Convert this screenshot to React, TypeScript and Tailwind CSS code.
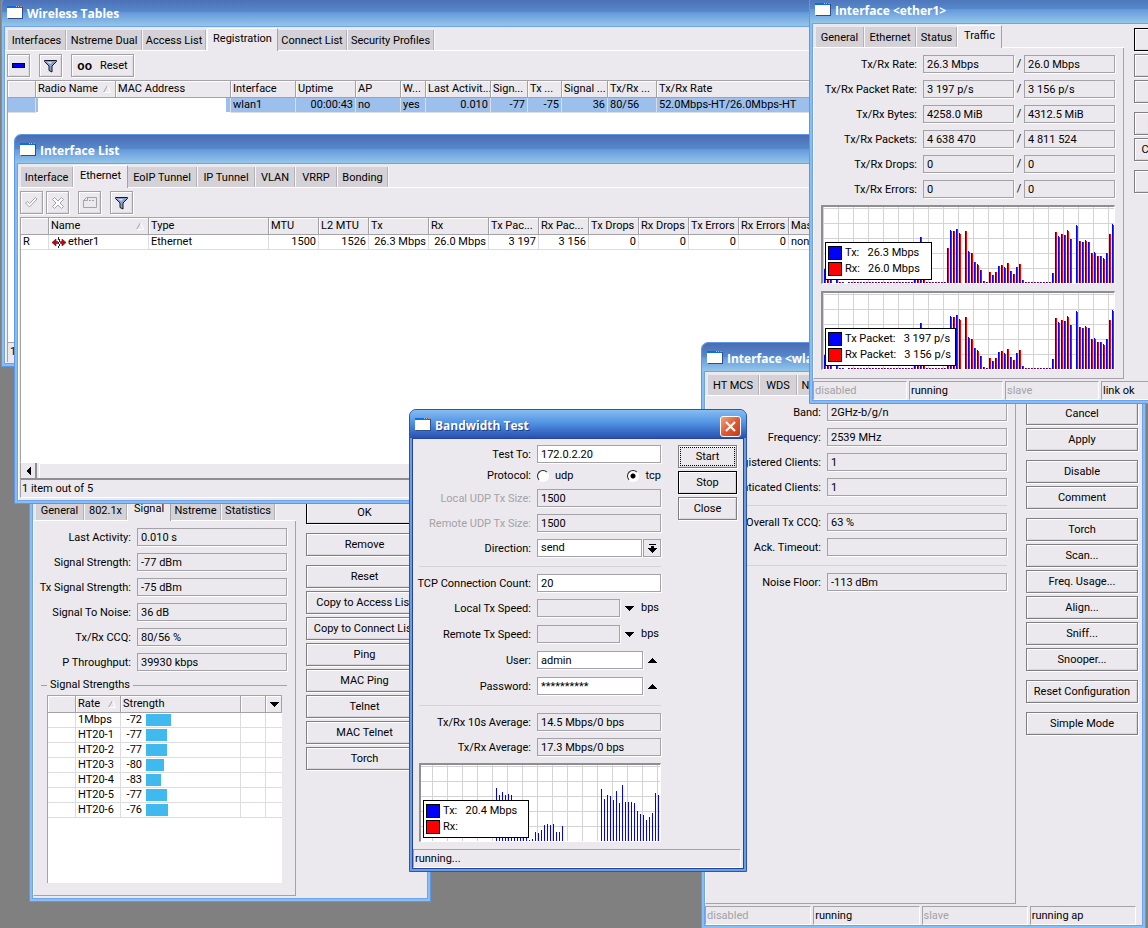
import { ReactNode, useId } from "react";
import clsx from "clsx";

interface WinProps {
  title: string;
  place: string;
  active?: boolean;
  children: ReactNode;
}

const WinIcon = () => (
  <svg className="mb-[3px]" width="16" height="13" viewBox="0 0 16 13" aria-hidden="true">
    <rect x="1" y="1" width="15" height="12" fill="#2f4f8a" />
    <rect width="15" height="12" fill="#fffdf6" />
    <rect width="15" height="2" fill="#0a6fdc" />
    <rect x="9" width="1" height="1" fill="#9cc8f5" />
    <rect x="11" width="1" height="1" fill="#9cc8f5" />
    <rect x="13" width="2" height="1" fill="#f0703a" />
  </svg>
);

const Win = ({ title, place, active, children }: WinProps) => (
  <section
    className={clsx(
      "absolute flex flex-col overflow-hidden rounded-t-[7px] border",
      active ? "border-[#2b55b5] bg-[#6a9ee0]" : "border-[#5f97e8] bg-[#8abef0]",
      place
    )}
  >
    <header
      className={clsx(
        "flex h-7 shrink-0 items-center gap-1 pl-[5px] pt-1",
        active
          ? "bg-linear-to-b from-[#86bdf2] via-[#4d8fe0] to-[#2a4fb0]"
          : "bg-[linear-gradient(#4b6cb2,#5588cb_48%,#6699dc_52%,#94c6e8)]"
      )}
    >
      <WinIcon />
      <h2
        className={clsx(
          "grow font-['Open_Sans',sans-serif] text-[12px] leading-4 font-bold whitespace-nowrap text-white",
          active && "[text-shadow:1px_1px_0_#1c3a8c]"
        )}
      >
        {title}
      </h2>
      {active && (
        <button
          aria-label="Close window"
          className="mr-[5px] flex h-[21px] w-[21px] items-center justify-center rounded-[3px] border border-white bg-linear-to-br from-[#f0a080] via-[#e05a35] to-[#c23a1a]"
        >
          <svg width="13" height="13" viewBox="0 0 13 13">
            <path d="M2 2L11 11M11 2L2 11" stroke="#fff" strokeWidth="2.2" />
          </svg>
        </button>
      )}
    </header>
    <div className="flex min-h-0 grow px-[2px] pb-[2px]">
      <div
        className={clsx(
          "flex min-w-0 grow flex-col border bg-[#ebe9ed]",
          active ? "border-[#2444a0]" : "border-[#6ca2ee]"
        )}
      >
        {children}
      </div>
    </div>
  </section>
);

interface Tab {
  name: string;
  width: string;
  active?: boolean;
}

const Tabs = ({ tabs }: { tabs: Tab[] }) => (
  <div role="tablist" className="flex h-6 shrink-0 items-end pl-[3px] shadow-[inset_0_-1px_0_#fff]">
    {tabs.map((t) => (
      <button
        key={t.name}
        role="tab"
        aria-selected={!!t.active}
        className={clsx(
          "shrink-0 whitespace-nowrap",
          t.width,
          t.active
            ? "h-[23px] border-t border-r border-l border-t-white border-r-[#a3a2a7] border-l-white bg-[#ebe9ed] pb-[2px]"
            : "mb-px h-5 border-r border-r-[#b3b2b6] bg-[#d4d2d6] pt-px shadow-[1px_0_0_#f7f6f8]"
        )}
      >
        {t.name}
      </button>
    ))}
  </div>
);

const Btn = ({ children, look = "plain" }: { children: ReactNode; look?: "plain" | "default" | "focus" }) => (
  <button
    className={clsx(
      "h-[23px] w-full border text-center whitespace-nowrap shadow-[inset_1px_1px_0_#fff,inset_-1px_-1px_0_#d8d6db,1px_1px_0_#fff]",
      look === "default" ? "border-black" : "border-[#7f7e83]",
      look === "focus" && "outline-1 -outline-offset-3 outline-black outline-dotted"
    )}
  >
    {children}
  </button>
);

const ButtonColumn = ({ groups, width }: { groups: string[][]; width: string }) => (
  <div className={clsx("flex shrink-0 flex-col gap-[9px] pt-1 pr-1 pl-[10px]", width)}>
    {groups.map((g) => (
      <div key={g[0]} className="flex flex-col gap-[3px]">
        {g.map((b) => (
          <Btn key={b} look={b === "OK" ? "default" : "plain"}>
            {b}
          </Btn>
        ))}
      </div>
    ))}
  </div>
);

const ToolBtn = ({ label, wide, children }: { label: string; wide?: boolean; children: ReactNode }) => (
  <button
    aria-label={label}
    className={clsx(
      "flex h-[23px] items-center justify-center gap-2 border border-[#a3a2a7] shadow-[inset_1px_1px_0_#fff,inset_-1px_-1px_0_#dddbe0,1px_1px_0_#fff]",
      wide ? "w-[63px]" : "w-[23px]"
    )}
  >
    {children}
  </button>
);

const Funnel = () => (
  <svg width="13" height="14" viewBox="0 0 13 14">
    <path d="M0.5 1.5H12.5V2.5L8 7V13L5 11.5V7L0.5 2.5Z" fill="#8aa0cc" stroke="#16161c" />
    <path d="M3 3H8L6.5 5Z" fill="#d9e2f4" />
  </svg>
);

const SortMark = () => (
  <svg className="mr-1 shrink-0" width="8" height="8" viewBox="0 0 8 8" aria-hidden="true">
    <path d="M4.5 0.5L0.5 7.5" stroke="#a3a2a7" fill="none" />
    <path d="M4.5 0.5L7.5 7.5H0.5" stroke="#fff" fill="none" />
  </svg>
);

const Triangle = ({ up }: { up?: boolean }) => (
  <svg width="9" height="5" viewBox="0 0 9 5" shapeRendering="crispEdges">
    <path d={up ? "M0 5L4.5 0L9 5Z" : "M0 0H9L4.5 5Z"} />
  </svg>
);

const inputBase = "h-[18px] min-w-0 border border-[#a3a2a7] pl-[3px] shadow-[1px_1px_0_#fff] outline-none";

interface FieldProps {
  label: string;
  value?: string;
  value2?: string;
  labelWidth: string;
  dim?: boolean;
  editable?: boolean;
  tall?: boolean;
  inputWidth?: string;
  after?: ReactNode;
}

const Field = ({ label, value = "", value2, labelWidth, dim, editable, tall, inputWidth = "flex-1", after }: FieldProps) => {
  const id = useId();
  const input = clsx(inputBase, inputWidth, editable ? "bg-white" : "bg-[#ebe9ed]");

  return (
    <div className={clsx("flex items-start", tall ? "h-[19px]" : "h-[18px]")}>
      <label
        htmlFor={id}
        className={clsx("mr-[6px] flex shrink-0 justify-end leading-5 whitespace-nowrap", labelWidth, dim && "text-[#a3a2a7]")}
      >
        {label}:
      </label>
      <input id={id} className={input} defaultValue={value} readOnly={!editable} />
      {value2 !== undefined && (
        <>
          <span className="w-[10px] text-center leading-[18px]">/</span>
          <input aria-label={`${label}, received`} className={input} defaultValue={value2} readOnly />
        </>
      )}
      {after}
    </div>
  );
};

const Separator = () => <div className="h-[3px] border-b border-[#d3d2d6]" />;

interface ChartProps {
  width: number;
  gridStart: number;
  tx: number[];
  both?: boolean;
  legend: [string, string];
  legendWidth: string;
}

const Chart = ({ width, gridStart, tx, both, legend, legendWidth }: ChartProps) => {
  const columns = Array.from({ length: Math.ceil((width - gridStart) / 15) }, (_, i) => gridStart + i * 15);
  const rows = [1, 16, 31, 46, 61];

  return (
    <div className="relative h-[79px] border-t-2 border-r border-b border-l-2 border-t-[#8f8e92] border-r-white border-b-white border-l-[#8f8e92] bg-white">
      <svg className="block" width={width} height="76" shapeRendering="crispEdges">
        {columns.map((x) => (
          <rect key={x} x={x} y="0" width="1" height="76" fill="#d3d3d3" />
        ))}
        {rows.map((y) => (
          <rect key={y} x="0" y={y} width={width} height="1" fill="#d3d3d3" />
        ))}
        {tx.map((v, i) => (
          <g key={i}>
            <rect x={i * 3 + (both ? 1 : 0)} y={76 - v} width="1" height={v} fill="#00f" />
            {both && <rect x={i * 3 + 2} y={76 - v + (v > 12 && i % 3 === 0 ? 1 : 0)} width="1" height={v} fill="#f00" />}
          </g>
        ))}
      </svg>
      <ul className={clsx("absolute top-[35px] left-[2px] flex h-[38px] flex-col justify-center gap-[2px] border border-black bg-white pl-[2px]", legendWidth)}>
        {legend.map((text, i) => (
          <li key={text} className="flex h-[14px] items-center gap-[3px] whitespace-pre">
            <span className={clsx("h-[14px] w-[14px] shrink-0 border border-black", i === 0 ? "bg-[#00f]" : "bg-[#f00]")} />
            {text}
          </li>
        ))}
      </ul>
    </div>
  );
};

const StatusBar = ({ cells }: { cells: { text: string; off?: boolean }[] }) => (
  <footer className="mt-[2px] flex h-[19px] shrink-0 gap-[2px] pr-[6px]">
    {cells.map((c) => (
      <span
        key={c.text}
        className={clsx(
          "flex-1 border border-t-[#a3a2a7] border-r-white border-b-white border-l-[#a3a2a7] pl-px leading-[18px]",
          c.off && "text-[#a3a2a7]"
        )}
      >
        {c.text}
      </span>
    ))}
  </footer>
);

interface Column {
  name: string;
  width: string;
  sorted?: boolean;
}

const GridHead = ({ columns }: { columns: Column[] }) => (
  <>
    <colgroup>
      {columns.map((c, i) => (
        <col key={i} className={c.width} />
      ))}
    </colgroup>
    <thead>
      <tr>
        {columns.map((c, i) => (
          <th
            key={i}
            className="h-[17px] overflow-hidden border-r border-b border-[#a3a2a7] bg-[#ebe9ed] p-0 pl-[2px] text-left leading-4 font-normal whitespace-nowrap shadow-[inset_1px_1px_0_#fff]"
          >
            <span className="flex items-center justify-between">
              {c.name}
              {c.sorted && <SortMark />}
            </span>
          </th>
        ))}
      </tr>
    </thead>
  </>
);

const tableClass = "w-full table-fixed border-separate border-spacing-0";
const cellClass = "h-[15px] overflow-hidden border-r border-b border-[#dcdde2] px-[2px] py-0 leading-[14px] whitespace-nowrap";

const txHistory = [
  14, 4, 4, 0, 4, 1, 1, 0, 1, 1, 1, 1, 1, 1, 1, 1, 1, 1, 1, 1, 1, 1, 1, 1, 1, 1, 1, 1, 1, 1, 6, 6, 46, 6, 1, 1, 1, 1, 1, 1, 1,
  35, 53, 52, 54, 50, 0, 52, 32, 30, 21, 19, 13, 2, 1, 11, 8, 11, 17, 18, 16, 20, 12, 9, 16, 19, 3, 1, 1, 1, 1, 1, 1, 1, 1, 1,
  10, 51, 47, 49, 48, 53, 44, 0, 58, 42, 41, 43, 41, 30, 31, 27, 27, 25, 30, 49, 59,
];

const testHistory = [
  ...Array(25).fill(0),
  53, 46, 49, 46, 47, 46, 30, 28, 20, 14, 8, 1, 2, 9, 8, 11, 16, 17, 16, 17, 9, 9, 15,
  ...Array(12).fill(0),
  52, 42, 46, 45, 41, 50, 38, 56, 39, 39, 39, 38, 30, 27, 26, 21, 24, 28, 48, 46,
];

const wirelessColumns: Column[] = [
  { name: "", width: "w-[28px]" },
  { name: "Radio Name", width: "w-[80px]", sorted: true },
  { name: "MAC Address", width: "w-[115px]" },
  { name: "Interface", width: "w-[65px]" },
  { name: "Uptime", width: "w-[60px]" },
  { name: "AP", width: "w-[45px]" },
  { name: "W...", width: "w-[25px]" },
  { name: "Last Activit...", width: "w-[65px]" },
  { name: "Sign...", width: "w-[37px]" },
  { name: "Tx ...", width: "w-[34px]" },
  { name: "Signal ...", width: "w-[46px]" },
  { name: "Tx/Rx ...", width: "w-[49px]" },
  { name: "Tx/Rx Rate", width: "" },
];

const wirelessCells = [
  { text: "wlan1" },
  { text: "00:00:43", right: true },
  { text: "no" },
  { text: "yes" },
  { text: "0.010", right: true },
  { text: "-77", right: true },
  { text: "-75", right: true },
  { text: "36", right: true },
  { text: "80/56" },
  { text: "52.0Mbps-HT/26.0Mbps-HT" },
];

const WirelessTables = () => (
  <Win title="Wireless Tables" place="left-px -top-[3px] h-[370px] w-[900px]">
    <Tabs
      tabs={[
        { name: "Interfaces", width: "w-[58px] mr-px" },
        { name: "Nstreme Dual", width: "w-[75px] mr-px" },
        { name: "Access List", width: "w-[63px] mr-px" },
        { name: "Registration", width: "w-[71px]", active: true },
        { name: "Connect List", width: "w-[69px] mr-px" },
        { name: "Security Profiles", width: "w-[86px]" },
      ]}
    />
    <div className="flex min-h-0 grow flex-col border-l border-white pl-px">
      <div className="flex gap-[9px] py-[3px]">
        <ToolBtn label="Remove">
          <span className="h-[5px] w-[13px] border border-black bg-[#00f]" />
        </ToolBtn>
        <ToolBtn label="Filter">
          <Funnel />
        </ToolBtn>
        <ToolBtn label="Reset" wide>
          <b className="font-['Liberation_Sans',sans-serif] text-[12px]">oo</b>
          <span>Reset</span>
        </ToolBtn>
      </div>
      <div className="grow border-t border-l border-[#a3a2a7] bg-white">
        <table className={tableClass}>
          <GridHead columns={wirelessColumns} />
          <tbody>
            <tr className="bg-[#9dbfec]">
              <td className={cellClass} />
              <td className="border-r border-b border-white p-0 pl-[2px]">
                <div className="h-[14px] bg-white" />
              </td>
              <td className="border-r border-b border-r-[#dcdde2] border-b-white p-0 pr-1">
                <div className="h-[14px] bg-white" />
              </td>
              {wirelessCells.map((c, i) => (
                <td key={i} className={clsx(cellClass, c.right && "text-right")}>
                  {c.text}
                </td>
              ))}
            </tr>
          </tbody>
        </table>
      </div>
      <footer className="mb-px h-5 border-t border-l border-[#a3a2a7] pl-[2px] leading-[18px]">1 item</footer>
    </div>
  </Win>
);

const interfaceColumns: Column[] = [
  { name: "", width: "w-[28px]" },
  { name: "Name", width: "w-[100px]", sorted: true },
  { name: "Type", width: "w-[120px]" },
  { name: "MTU", width: "w-[50px]" },
  { name: "L2 MTU", width: "w-[50px]" },
  { name: "Tx", width: "w-[60px]" },
  { name: "Rx", width: "w-[60px]" },
  { name: "Tx Pac...", width: "w-[50px]" },
  { name: "Rx Pac...", width: "w-[50px]" },
  { name: "Tx Drops", width: "w-[50px]" },
  { name: "Rx Drops", width: "w-[50px]" },
  { name: "Tx Errors", width: "w-[50px]" },
  { name: "Rx Errors", width: "w-[50px]" },
  { name: "Master Port", width: "" },
];

const InterfaceList = () => (
  <Win title="Interface List" place="left-[14px] top-[134px] h-[370px] w-[880px]">
    <Tabs
      tabs={[
        { name: "Interface", width: "w-[52px]" },
        { name: "Ethernet", width: "w-[55px]", active: true },
        { name: "EoIP Tunnel", width: "w-[69px] mr-px" },
        { name: "IP Tunnel", width: "w-[57px] mr-px" },
        { name: "VLAN", width: "w-[39px] mr-px" },
        { name: "VRRP", width: "w-[41px] mr-px" },
        { name: "Bonding", width: "w-[50px]" },
      ]}
    />
    <div className="flex min-h-0 grow flex-col border-l border-white pl-px">
      <div className="flex gap-[9px] py-[3px]">
        <div className="flex gap-[3px]">
          <ToolBtn label="Enable">
            <svg width="13" height="11" viewBox="0 0 13 11">
              <path d="M0.5 6L2.5 4.5L4.5 6.5L10.5 0.5L12 2L4.5 10Z" fill="#fff" stroke="#a3a2a7" />
            </svg>
          </ToolBtn>
          <ToolBtn label="Disable">
            <svg width="12" height="12" viewBox="0 0 12 12">
              <path
                d="M2.5 0.5L6 4L9.5 0.5L11.5 2.5L8 6L11.5 9.5L9.5 11.5L6 8L2.5 11.5L0.5 9.5L4 6L0.5 2.5Z"
                fill="#fff"
                stroke="#a3a2a7"
              />
            </svg>
          </ToolBtn>
        </div>
        <ToolBtn label="Comment">
          <svg width="14" height="11" viewBox="0 0 14 11">
            <path d="M3.5 0.5H13.5V10.5H0.5V3.5ZM0.5 3.5H4.5V0.5M6 3.5H8M9 3.5H11" fill="none" stroke="#a3a2a7" />
          </svg>
        </ToolBtn>
        <ToolBtn label="Filter">
          <Funnel />
        </ToolBtn>
      </div>
      <div className="grow border-t border-l border-[#a3a2a7] bg-white">
        <table className={tableClass}>
          <GridHead columns={interfaceColumns} />
          <tbody>
            <tr>
              <td className={cellClass}>R</td>
              <td className={cellClass}>
                <span className="flex items-center gap-[2px] pl-px">
                  <svg width="14" height="11" viewBox="0 0 14 11">
                    <path d="M0 5.5L4 2V4.5H5.5V6.5H4V9ZM14 5.5L10 2V4.5H8.5V6.5H10V9Z" fill="#d00014" stroke="#5a0008" strokeWidth="0.6" />
                    <path d="M6.5 0V3M7.5 2V5M6.5 5V7M7.5 7V9M6.5 9V11" stroke="#222" />
                  </svg>
                  ether1
                </span>
              </td>
              <td className={cellClass}>Ethernet</td>
              {["1500", "1526", "26.3 Mbps", "26.0 Mbps", "3 197", "3 156", "0", "0", "0", "0"].map((v, i) => (
                <td key={i} className={clsx(cellClass, "text-right")}>
                  {v}
                </td>
              ))}
              <td className={cellClass}>none</td>
            </tr>
          </tbody>
        </table>
      </div>
      <div className="flex h-4 gap-[2px] border-t border-l border-t-white border-l-[#a3a2a7]">
        <button aria-label="Scroll left" className="flex w-4 items-center justify-center border-r-2 border-[#8f8e92]">
          <svg width="5" height="8" viewBox="0 0 5 8" shapeRendering="crispEdges">
            <path d="M5 0V8L0 4Z" />
          </svg>
        </button>
        <div className="grow border-t border-l border-white" />
      </div>
      <footer className="mb-[2px] h-5 border-t-2 border-b border-l border-t-[#8f8e92] border-b-white border-l-[#a3a2a7] pl-px leading-[18px]">
        1 item out of 5
      </footer>
    </div>
  </Win>
);

const rates = [
  { rate: "1Mbps", strength: -72, bar: 25 },
  { rate: "HT20-1", strength: -77, bar: 21 },
  { rate: "HT20-2", strength: -77, bar: 21 },
  { rate: "HT20-3", strength: -80, bar: 18 },
  { rate: "HT20-4", strength: -83, bar: 15 },
  { rate: "HT20-5", strength: -77, bar: 21 },
  { rate: "HT20-6", strength: -76, bar: 22 },
];

const panelClass = "flex grow flex-col gap-[7px] border-r border-b border-l border-r-[#a3a2a7] border-b-[#a3a2a7] border-l-white pt-[7px] pr-2 pb-2 pl-[7px]";

const ClientSignal = () => (
  <Win title="AP Client" place="left-[29px] top-[467px] h-[435px] w-[402px]">
    <div className="flex grow pb-[2px]">
      <div className="flex min-w-0 grow flex-col">
        <Tabs
          tabs={[
            { name: "General", width: "w-[48px] mr-px" },
            { name: "802.1x", width: "w-[42px]" },
            { name: "Signal", width: "w-[44px]", active: true },
            { name: "Nstreme", width: "w-[50px] mr-px" },
            { name: "Statistics", width: "w-[53px]" },
          ]}
        />
        <div className={panelClass}>
          <Field label="Last Activity" value="0.010 s" labelWidth="w-[90px]" />
          <Field label="Signal Strength" value="-77 dBm" labelWidth="w-[90px]" />
          <Field label="Tx Signal Strength" value="-75 dBm" labelWidth="w-[90px]" />
          <Field label="Signal To Noise" value="36 dB" labelWidth="w-[90px]" />
          <Field label="Tx/Rx CCQ" value="80/56 %" labelWidth="w-[90px]" />
          <Field label="P Throughput" value="39930 kbps" labelWidth="w-[90px]" />
          <fieldset className="flex grow border-t border-[#a3a2a7] pt-[3px] pr-[5px] pb-1 pl-[6px]">
            <legend className="px-[3px] leading-[14px]">Signal Strengths</legend>
            <div className="grow border-t border-l border-[#a3a2a7] bg-white">
              <table className={tableClass}>
                <colgroup>
                  <col className="w-[28px]" />
                  <col className="w-[45px]" />
                  <col className="w-[120px]" />
                  <col className="w-[25px]" />
                  <col />
                </colgroup>
                <thead>
                  <tr>
                    {["", "Rate", "Strength", "", "menu"].map((h, i) => (
                      <th
                        key={i}
                        className="h-[17px] border-r border-b border-[#a3a2a7] bg-[#ebe9ed] p-0 pl-[2px] text-left leading-4 font-normal shadow-[inset_1px_1px_0_#fff]"
                      >
                        {h === "menu" ? (
                          <button aria-label="Columns" className="flex h-4 w-full items-center pl-[2px]">
                            <Triangle />
                          </button>
                        ) : (
                          <span className="flex items-center justify-between">
                            {h}
                            {h === "Rate" && <SortMark />}
                          </span>
                        )}
                      </th>
                    ))}
                  </tr>
                </thead>
                <tbody>
                  {rates.map((r) => (
                    <tr key={r.rate}>
                      <td className={cellClass} />
                      <td className={cellClass}>{r.rate}</td>
                      <td className={cellClass}>
                        <span className="flex items-center gap-1">
                          <span className="w-[19px] text-right">{r.strength}</span>
                          <span className="h-3 bg-[#3fb9ee]" style={{ width: r.bar }} />
                        </span>
                      </td>
                      <td className={cellClass} />
                      <td className="border-b border-[#dcdde2]" />
                    </tr>
                  ))}
                </tbody>
              </table>
            </div>
          </fieldset>
        </div>
      </div>
      <ButtonColumn
        width="w-[131px]"
        groups={[
          ["OK"],
          ["Remove"],
          ["Reset", "Copy to Access List", "Copy to Connect List", "Ping", "MAC Ping", "Telnet", "MAC Telnet", "Torch"],
        ]}
      />
    </div>
  </Win>
);

const WlanInterface = () => (
  <Win title="Interface <wlan1>" place="left-[701px] top-[342px] h-[587px] w-[445px]">
    <div className="flex min-h-0 grow">
      <div className="flex min-w-0 grow flex-col">
        <Tabs
          tabs={[
            { name: "HT MCS", width: "w-[51px] mr-px" },
            { name: "WDS", width: "w-[37px] mr-px" },
            { name: "Nstreme", width: "w-[50px] mr-px" },
            { name: "Status", width: "w-[45px]", active: true },
          ]}
        />
        <div className={panelClass}>
          <Field label="Band" value="2GHz-b/g/n" labelWidth="w-[108px]" />
          <Field label="Frequency" value="2539 MHz" labelWidth="w-[108px]" />
          <Field label="Registered Clients" value="1" labelWidth="w-[108px]" />
          <Field label="Authenticated Clients" value="1" labelWidth="w-[108px]" />
          <Separator />
          <Field label="Overall Tx CCQ" value="63 %" labelWidth="w-[108px]" />
          <Field label="Ack. Timeout" labelWidth="w-[108px]" />
          <Separator />
          <Field label="Noise Floor" value="-113 dBm" labelWidth="w-[108px]" />
        </div>
      </div>
      <ButtonColumn
        width="w-[126px]"
        groups={[
          ["OK", "Cancel", "Apply"],
          ["Disable", "Comment"],
          ["Torch", "Scan...", "Freq. Usage...", "Align...", "Sniff...", "Snooper..."],
          ["Reset Configuration"],
          ["Simple Mode"],
        ]}
      />
    </div>
    <StatusBar cells={[{ text: "disabled", off: true }, { text: "running" }, { text: "slave", off: true }, { text: "running ap" }]} />
  </Win>
);

const EtherInterface = () => (
  <Win title="Interface <ether1>" place="left-[809px] -top-[6px] h-[410px] w-[396px]">
    <div className="flex min-h-0 grow">
      <div className="flex min-w-0 grow flex-col">
        <Tabs
          tabs={[
            { name: "General", width: "w-[48px] mr-px" },
            { name: "Ethernet", width: "w-[51px] mr-px" },
            { name: "Status", width: "w-[40px]" },
            { name: "Traffic", width: "w-[45px]", active: true },
          ]}
        />
        <div className={panelClass}>
          <Field label="Tx/Rx Rate" value="26.3 Mbps" value2="26.0 Mbps" labelWidth="w-[96px]" />
          <Field label="Tx/Rx Packet Rate" value="3 197 p/s" value2="3 156 p/s" labelWidth="w-[96px]" />
          <Field label="Tx/Rx Bytes" value="4258.0 MiB" value2="4312.5 MiB" labelWidth="w-[96px]" />
          <Field label="Tx/Rx Packets" value="4 638 470" value2="4 811 524" labelWidth="w-[96px]" />
          <Field label="Tx/Rx Drops" value="0" value2="0" labelWidth="w-[96px]" />
          <Field label="Tx/Rx Errors" value="0" value2="0" labelWidth="w-[96px]" />
          <Chart width={291} gridStart={0} tx={txHistory} both legend={["Tx:   26.3 Mbps", "Rx:   26.0 Mbps"]} legendWidth="w-[107px]" />
          <Chart width={291} gridStart={0} tx={txHistory} both legend={["Tx Packet:   3 197 p/s", "Rx Packet:   3 156 p/s"]} legendWidth="w-[131px]" />
        </div>
      </div>
      <ButtonColumn width="w-[77px]" groups={[["OK", "Cancel", "Apply"], ["Disable", "Comment"], ["Torch"]]} />
    </div>
    <StatusBar cells={[{ text: "disabled", off: true }, { text: "running" }, { text: "slave", off: true }, { text: "link ok" }]} />
  </Win>
);

const radioClass =
  "h-3 w-3 appearance-none rounded-full border border-t-[#222] border-r-white border-b-white border-l-[#222] bg-white checked:bg-[radial-gradient(circle,#000_2px,#fff_3px)]";

const BandwidthTest = () => {
  const direction = useId();
  const label = "w-[112px]";
  const unit = (
    <span className="flex h-[18px] flex-1 items-center justify-between pr-[2px] pl-[5px]">
      <button aria-label="Set speed">
        <Triangle />
      </button>
      bps
    </span>
  );
  const clear = (
    <button aria-label="Hide field" className="flex h-[18px] items-center pl-[5px]">
      <Triangle up />
    </button>
  );

  return (
    <Win title="Bandwidth Test" place="left-[409px] top-[409px] h-[463px] w-[338px]" active>
      <div className="flex grow gap-[17px] px-[6px] pt-[6px]">
        <div className="flex min-w-0 grow flex-col gap-[7px]">
          <Field label="Test To" value="172.0.2.20" labelWidth={label} editable />
          <div role="radiogroup" aria-label="Protocol" className="flex h-3 items-center">
            <span className="mr-[6px] w-[112px] text-right">Protocol:</span>
            <div className="flex flex-1 justify-between">
              <label className="flex items-center gap-[6px]">
                <input type="radio" name="protocol" className={radioClass} />
                udp
              </label>
              <label className="flex items-center gap-[6px]">
                <input type="radio" name="protocol" defaultChecked className={radioClass} />
                tcp
              </label>
            </div>
          </div>
          <Field label="Local UDP Tx Size" value="1500" labelWidth={label} dim />
          <Field label="Remote UDP Tx Size" value="1500" labelWidth={label} dim />
          <div className="flex h-[18px]">
            <label htmlFor={direction} className="mr-[6px] w-[112px] text-right leading-5">
              Direction:
            </label>
            <select id={direction} defaultValue="send" className={clsx(inputBase, "flex-1 appearance-none bg-white")}>
              <option>send</option>
              <option>receive</option>
              <option>both</option>
            </select>
            <button aria-label="Open list" className="ml-px flex w-[18px] items-center justify-center border border-[#a3a2a7] shadow-[1px_1px_0_#fff]">
              <svg width="9" height="9" viewBox="0 0 9 9" shapeRendering="crispEdges">
                <path d="M1 0H8V1H1ZM3 2H6V4H9L4.5 9L0 4H3Z" />
              </svg>
            </button>
          </div>
          <Separator />
          <Field label="TCP Connection Count" value="20" labelWidth={label} editable />
          <Field label="Local Tx Speed" labelWidth={label} inputWidth="w-[83px]" tall after={unit} />
          <Field label="Remote Tx Speed" labelWidth={label} inputWidth="w-[83px]" tall after={unit} />
          <Field label="User" value="admin" labelWidth={label} inputWidth="w-[106px]" editable tall after={clear} />
          <Field label="Password" value="**********" labelWidth={label} inputWidth="w-[106px]" editable tall after={clear} />
          <Separator />
          <Field label="Tx/Rx 10s Average" value="14.5 Mbps/0 bps" labelWidth={label} />
          <Field label="Tx/Rx Average" value="17.3 Mbps/0 bps" labelWidth={label} />
          <Chart width={239} gridStart={11} tx={testHistory} legend={["Tx:   20.4 Mbps", "Rx:"]} legendWidth="w-[106px]" />
        </div>
        <div className="flex w-[59px] shrink-0 flex-col gap-[3px]">
          <Btn look="focus">Start</Btn>
          <Btn look="default">Stop</Btn>
          <Btn>Close</Btn>
        </div>
      </div>
      <footer className="mr-[2px] h-[19px] border border-t-[#a3a2a7] border-r-white border-b-white border-l-[#a3a2a7] pl-px leading-[18px]">
        running...
      </footer>
    </Win>
  );
};

const App = () => (
  <main className="relative min-h-screen overflow-hidden bg-[#808080] font-['Roboto','Liberation_Sans',sans-serif] text-[11px] leading-4 text-black">
    <WirelessTables />
    <ClientSignal />
    <InterfaceList />
    <WlanInterface />
    <EtherInterface />
    <BandwidthTest />
  </main>
);

export default App;
